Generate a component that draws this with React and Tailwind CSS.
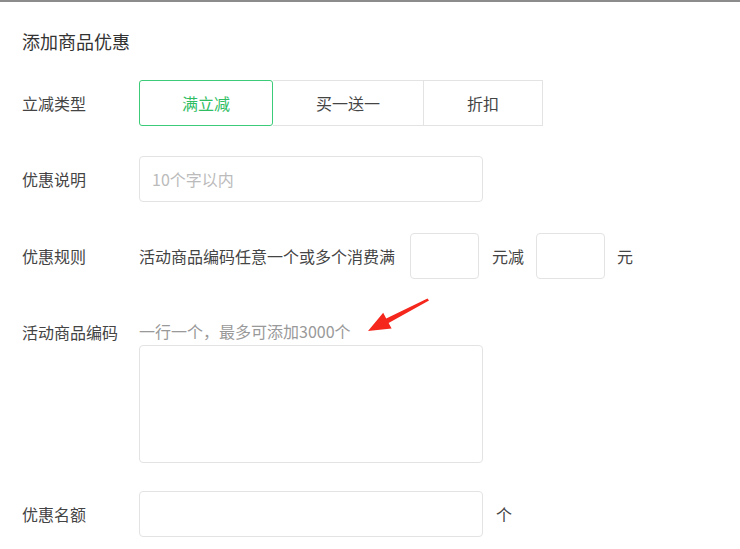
import React from 'react';

const font = { fontFamily: '"Noto Sans CJK SC", "Noto Sans", sans-serif' };

const Label = ({ children, className = '' }) => (
  <div className={`w-[117px] shrink-0 text-[16px] leading-6 text-[#444] ${className}`}>{children}</div>
);

const Arrow = () => (
  <svg className="absolute left-0 top-0 pointer-events-none" width="740" height="549" viewBox="0 0 740 549">
    <polygon
      points="368,329 383.2,310.8 386.2,316.5 427.5,296.5 429,298.5 388.6,320.9 391.6,326.6"
      fill="#f5261c"
    />
  </svg>
);

export default function App() {
  const types = ['满立减', '买一送一', '折扣'];

  return (
    <div className="relative w-[740px] h-[549px] bg-white border-t-2 border-[#8c8c8c] overflow-hidden" style={font}>
      <div className="pl-[22px] pt-[27px]">
        <div className="text-[18px] leading-6 text-[#333]">添加商品优惠</div>

        {/* 立减类型 */}
        <div className="flex items-center mt-[27px]">
          <Label>立减类型</Label>
          <div className="flex">
            {types.map((t, i) => (
              <div
                key={t}
                className={`h-[46px] flex items-center text-[16px] ${
                  i === 0
                    ? 'px-[42px] border border-[#3ccb78] rounded-[3px] text-[#2ebd62]'
                    : 'px-[43px] border-y border-r border-[#e3e3e3] text-[#444]'
                }`}
              >
                {t}
              </div>
            ))}
          </div>
        </div>

        {/* 优惠说明 */}
        <div className="flex items-center mt-[30px]">
          <Label>优惠说明</Label>
          <div className="w-[344px] h-[46px] border border-[#e3e3e3] rounded-[4px] flex items-center px-[12px] text-[16px] text-[#bbb]">
            10个字以内
          </div>
        </div>

        {/* 优惠规则 */}
        <div className="flex items-center mt-[31px] text-[16px] text-[#444]">
          <Label>优惠规则</Label>
          <span>活动商品编码任意一个或多个消费满</span>
          <div className="ml-[15px] w-[69px] h-[46px] border border-[#e3e3e3] rounded-[4px]" />
          <span className="ml-[13px]">元减</span>
          <div className="ml-[12px] w-[69px] h-[46px] border border-[#e3e3e3] rounded-[4px]" />
          <span className="ml-[12px]">元</span>
        </div>

        {/* 活动商品编码 */}
        <div className="flex items-start mt-[40px]">
          <Label className="mt-px">活动商品编码</Label>
          <div className="flex flex-col">
            <div className="text-[16px] leading-6 text-[#999]">一行一个，最多可添加3000个</div>
            <div className="mt-[2px] w-[344px] h-[118px] border border-[#e3e3e3] rounded-[4px]" />
          </div>
        </div>

        {/* 优惠名额 */}
        <div className="flex items-center mt-[28px] text-[16px] text-[#444]">
          <Label>优惠名额</Label>
          <div className="w-[344px] h-[46px] border border-[#e3e3e3] rounded-[4px]" />
          <span className="ml-[13px]">个</span>
        </div>
      </div>
      <Arrow />
    </div>
  );
}
